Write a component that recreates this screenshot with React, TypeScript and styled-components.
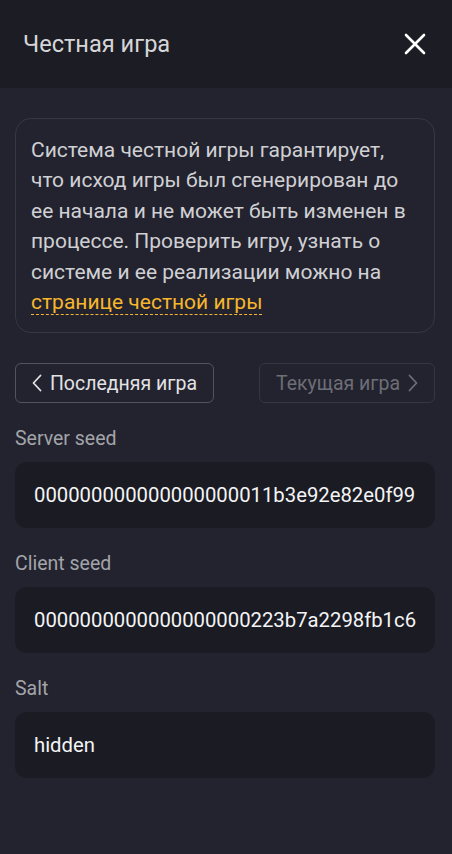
import React from "react";
import styled, { createGlobalStyle } from "styled-components";

const Global = createGlobalStyle`
  html, body { margin: 0; padding: 0; background: #22232e; }
  body { font-family: Roboto, "Noto Sans", Arial, sans-serif; -webkit-font-smoothing: antialiased; }
  * { box-sizing: border-box; }
`;

const Page = styled.div`
  width: 452px;
  min-height: 854px;
  background: #22232e;
`;

const Header = styled.header`
  height: 88px;
  background: #1c1d24;
  display: flex;
  align-items: center;
  justify-content: space-between;
  padding: 0 25px 0 23px;
`;

const Title = styled.h1`
  margin: 0;
  font-size: 23.6px;
  font-weight: 400;
  color: #d6d6d8;
`;

const CloseButton = styled.button`
  width: 24px;
  height: 24px;
  padding: 0;
  border: 0;
  background: none;
  display: flex;
  align-items: center;
  justify-content: center;
  cursor: pointer;
`;

const Content = styled.main`
  padding: 30px 17px 30px 15px;
  display: flex;
  flex-direction: column;
`;

const InfoBox = styled.div`
  border: 1px solid #363741;
  border-radius: 16px;
  padding: 16px 15px 15px;
  font-size: 21px;
  line-height: 30.4px;
  color: #d0d0d4;
`;

const Link = styled.a`
  color: #f6b62d;
  text-decoration: none;
  border-bottom: 1px dashed #f6b62d;
`;

const NavRow = styled.div`
  margin-top: 30px;
  display: flex;
  justify-content: space-between;
`;

const NavButton = styled.button<{ $disabled?: boolean }>`
  height: 40px;
  width: ${(p) => (p.$disabled ? "176px" : "199px")};
  border-radius: 6px;
  border: 1px solid ${(p) => (p.$disabled ? "#353641" : "#52535d")};
  background: transparent;
  color: ${(p) => (p.$disabled ? "#6d6e77" : "#e2e2e5")};
  font-family: inherit;
  font-size: 19.5px;
  display: flex;
  align-items: center;
  justify-content: center;
  gap: 8px;
  padding: 0;
  cursor: ${(p) => (p.$disabled ? "default" : "pointer")};
`;

const Label = styled.div`
  margin-top: 23.5px;
  margin-bottom: 11px;
  font-size: 19.5px;
  line-height: 24px;
  color: #a3a4aa;
`;

const Field = styled.div`
  height: 66.5px;
  border-radius: 12px;
  background: #1b1c23;
  padding: 0 19px;
  display: flex;
  align-items: center;
  font-size: 20.3px;
  color: #f4f4f6;
  white-space: nowrap;
  overflow: hidden;
`;

const Chevron = ({ dir, color }: { dir: "left" | "right"; color: string }) => (
  <svg width="10" height="18" viewBox="0 0 10 18" fill="none">
    <path
      d={dir === "left" ? "M8.5 1.5 1.5 9l7 7.5" : "M1.5 1.5 8.5 9l-7 7.5"}
      stroke={color}
      strokeWidth="1.8"
      strokeLinecap="round"
      strokeLinejoin="round"
    />
  </svg>
);

const fields = [
  { label: "Server seed", value: "000000000000000000011b3e92e82e0f99" },
  { label: "Client seed", value: "0000000000000000000223b7a2298fb1c6" },
  { label: "Salt", value: "hidden" },
];

export default function App() {
  return (
    <Page>
      <Global />
      <Header>
        <Title>Честная игра</Title>
        <CloseButton aria-label="close">
          <svg width="22" height="22" viewBox="0 0 22 22">
            <path d="M2 2l18 18M20 2 2 20" stroke="#ffffff" strokeWidth="2.6" strokeLinecap="round" />
          </svg>
        </CloseButton>
      </Header>
      <Content>
        <InfoBox>
          Система честной игры гарантирует, что исход игры был сгенерирован до ее начала и не может
          быть изменен в процессе. Проверить игру, узнать о системе и ее реализации можно на{" "}
          <Link href="#">странице честной игры</Link>
        </InfoBox>
        <NavRow>
          <NavButton>
            <Chevron dir="left" color="#e2e2e5" />
            Последняя игра
          </NavButton>
          <NavButton $disabled>
            Текущая игра
            <Chevron dir="right" color="#6d6e77" />
          </NavButton>
        </NavRow>
        {fields.map((f) => (
          <React.Fragment key={f.label}>
            <Label>{f.label}</Label>
            <Field>{f.value}</Field>
          </React.Fragment>
        ))}
      </Content>
    </Page>
  );
}
